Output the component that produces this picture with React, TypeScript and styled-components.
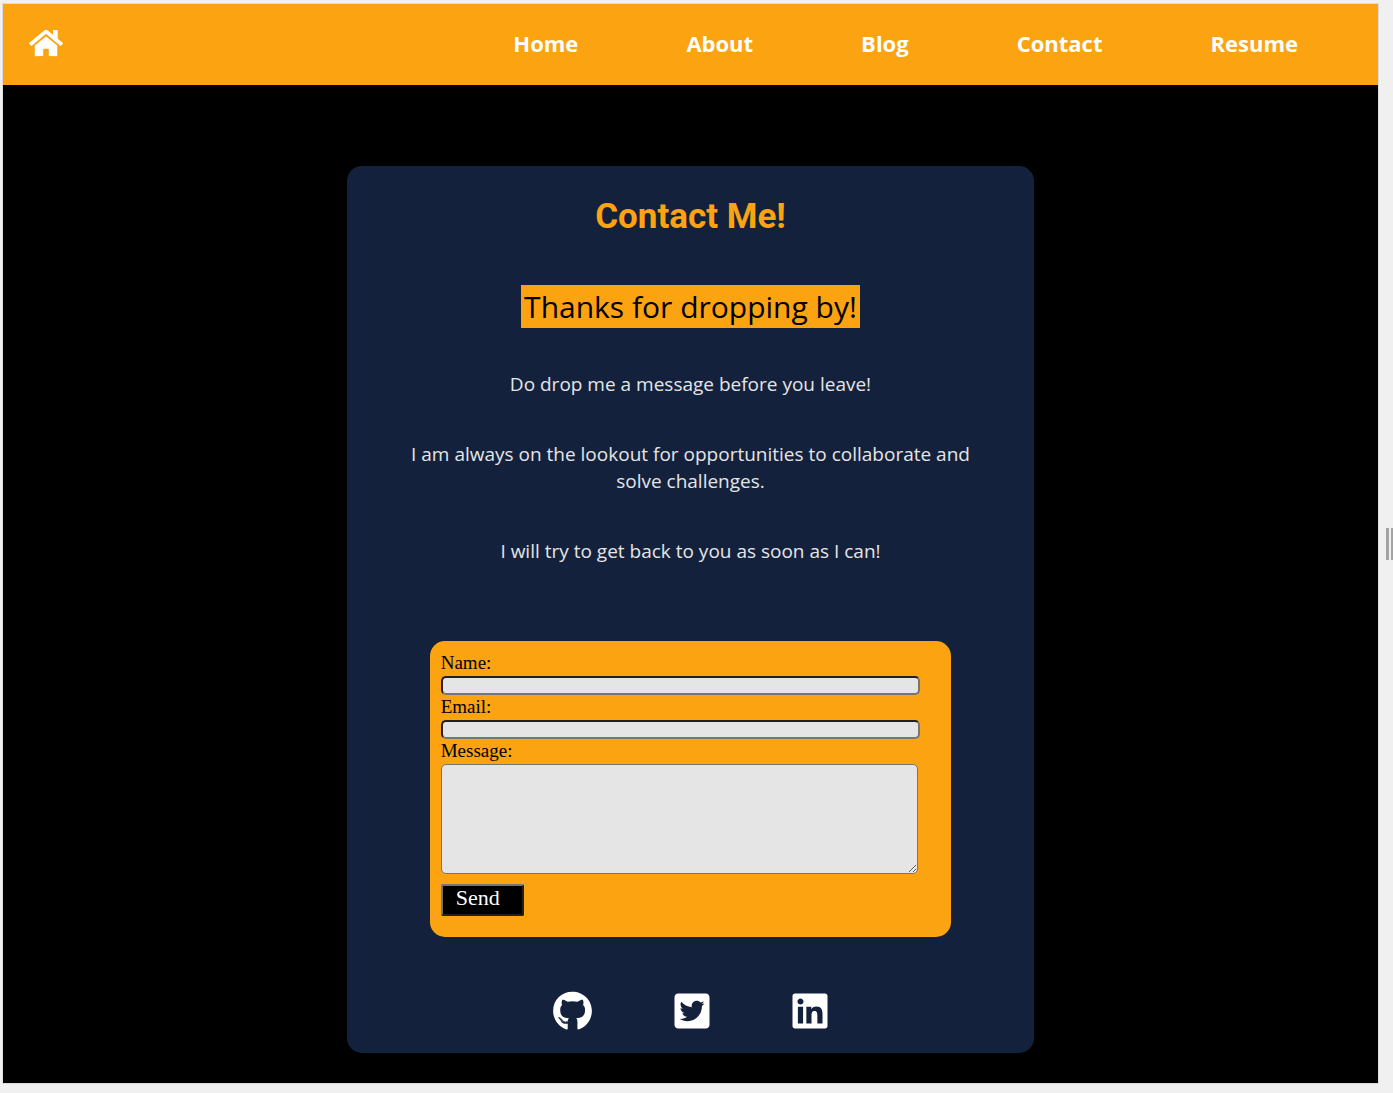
import React from "react";
import styled, { createGlobalStyle, css } from "styled-components";
import { FaGithub, FaHome, FaLinkedin, FaTwitterSquare } from "react-icons/fa";

const color = {
  orange: "#fca311",
  navy: "#14213d",
  grey: "#e5e5e5",
  black: "#000000",
  white: "#ffffff",
  frame: "#f0f0f0",
  frameLine: "#dcdce0",
  handle: "#a3a3a3",
};

const sans = `"Open Sans", "Noto Sans", sans-serif`;
const serif = `"Liberation Serif", "DejaVu Serif", serif`;

const GlobalStyle = createGlobalStyle`
  *, *::before, *::after { box-sizing: border-box; }
  body {
    margin: 0;
    background: ${color.frame};
    font-family: ${sans};
  }
`;

const Frame = styled.div`
  display: grid;
  grid-template-columns: minmax(0, 1fr) 15px;
  min-height: 100vh;
  padding: 4px 0 10px 3px;
`;

const Page = styled.div`
  display: flex;
  flex-direction: column;
  background: ${color.black};
  box-shadow: 0 0 0 1px ${color.frameLine};
`;

const Gutter = styled.div`
  display: flex;
  align-items: center;
  justify-content: flex-end;
  gap: 2px;
`;

const GutterBar = styled.span<{ $width: number }>`
  width: ${({ $width }) => $width}px;
  height: 32px;
  background: ${color.handle};
`;

const Header = styled.header`
  display: flex;
  align-items: center;
  justify-content: space-between;
  height: 81px;
  padding: 0 80px 4px 26px;
  background: ${color.orange};
`;

const IconLink = styled.a<{ $width: number; $height: number }>`
  display: flex;
  color: ${color.white};

  svg {
    width: ${({ $width }) => $width}px;
    height: ${({ $height }) => $height}px;
  }
`;

const Nav = styled.nav`
  display: flex;
  gap: 108px;
`;

const NavLink = styled.a`
  color: ${color.white};
  font-size: 22px;
  font-weight: 700;
  line-height: 32px;
  text-decoration: none;
`;

const Main = styled.main`
  display: flex;
  flex: 1;
  justify-content: center;
  align-items: flex-start;
  padding: 81px 0 30px;
`;

const Card = styled.section`
  display: flex;
  flex-direction: column;
  align-items: center;
  gap: 43px;
  width: 50%;
  padding: 25px 54px 22px;
  border-radius: 15px;
  background: ${color.navy};
  text-align: center;
`;

const Title = styled.h1`
  margin: 0;
  color: ${color.orange};
  font-family: Roboto, ${sans};
  font-size: 35px;
  font-weight: 700;
  line-height: 51px;
`;

const Highlight = styled.h2`
  margin: 0;
  padding: 0 3px;
  background: ${color.orange};
  color: ${color.black};
  font-size: 30px;
  font-weight: 500;
  line-height: 43px;
`;

const Text = styled.p`
  margin: 0;
  color: ${color.grey};
  font-size: 19px;
  line-height: 27px;
`;

const Form = styled.form`
  display: flex;
  flex-direction: column;
  align-items: flex-start;
  width: 90%;
  margin: 33px 0 11px;
  padding: 10px 11px 21px;
  border-radius: 15px;
  background: ${color.orange};
  font-family: ${serif};
`;

const Label = styled.label`
  padding-bottom: 2px;
  color: ${color.black};
  font-size: 19px;
  line-height: 23px;
`;

const field = css`
  margin: 0;
  border-radius: 5px;
  background: ${color.grey};
  font-family: ${serif};
  font-size: 13px;
`;

const Input = styled.input`
  ${field}
  width: 96%;
  height: 19px;
  padding: 0 4px;
  border: 2px inset #767676;
`;

const TextArea = styled.textarea`
  ${field}
  width: calc(96% - 2px);
  height: 110px;
  padding: 2px;
  border: 1px solid #767676;
  resize: both;
`;

const SendButton = styled.button`
  width: 83px;
  height: 32px;
  margin-top: 10px;
  padding: 0 13px 4px;
  border: 2px outset #767676;
  border-radius: 2px;
  background: ${color.black};
  color: ${color.white};
  font-family: ${serif};
  font-size: 22px;
  line-height: 24px;
  text-align: left;
`;

const Social = styled.div`
  display: flex;
  gap: 82px;
`;

const links = ["Home", "About", "Blog", "Contact", "Resume"];

export default function App() {
  return (
    <>
      <GlobalStyle />
      <Frame>
        <Page>
          <Header>
            <IconLink $width={34} $height={30} href="#home" aria-label="Home">
              <FaHome />
            </IconLink>
            <Nav>
              {links.map((name) => (
                <NavLink key={name} href={`#${name.toLowerCase()}`}>
                  {name}
                </NavLink>
              ))}
            </Nav>
          </Header>
          <Main>
            <Card>
              <Title>Contact Me!</Title>
              <Highlight>Thanks for dropping by!</Highlight>
              <Text>Do drop me a message before you leave!</Text>
              <Text>
                I am always on the lookout for opportunities to collaborate and
                solve challenges.
              </Text>
              <Text>I will try to get back to you as soon as I can!</Text>
              <Form onSubmit={(event) => event.preventDefault()}>
                <Label htmlFor="name">Name:</Label>
                <Input id="name" name="name" type="text" />
                <Label htmlFor="email">Email:</Label>
                <Input id="email" name="email" type="email" />
                <Label htmlFor="message">Message:</Label>
                <TextArea id="message" name="message" />
                <SendButton type="submit">Send</SendButton>
              </Form>
              <Social>
                <IconLink $width={39} $height={40} href="#github" aria-label="GitHub">
                  <FaGithub />
                </IconLink>
                <IconLink $width={36} $height={40} href="#twitter" aria-label="Twitter">
                  <FaTwitterSquare />
                </IconLink>
                <IconLink $width={36} $height={40} href="#linkedin" aria-label="LinkedIn">
                  <FaLinkedin />
                </IconLink>
              </Social>
            </Card>
          </Main>
        </Page>
        <Gutter>
          <GutterBar $width={3} />
          <GutterBar $width={2} />
        </Gutter>
      </Frame>
    </>
  );
}
